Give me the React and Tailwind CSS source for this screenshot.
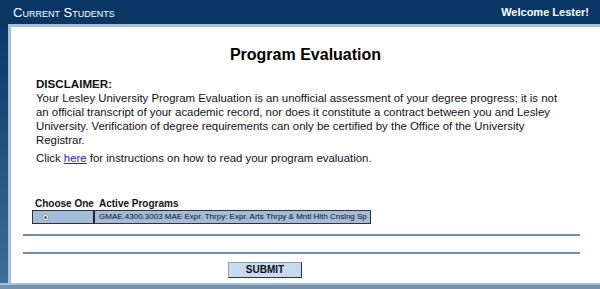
import React from 'react'

export default function App() {
  return (
    <div className="w-[600px] h-[289px] overflow-hidden bg-white font-['Liberation_Sans',Arial,sans-serif] flex flex-col">
      {/* Header */}
      <div className="h-[24px] bg-[#083766] flex items-center justify-between pl-[13px] pr-[11px] shrink-0">
        <div className="text-white text-[13px] leading-none pt-[1px]" style={{ fontVariant: 'small-caps' }}>
          Current Students
        </div>
        <div className="text-white text-[11px] font-bold leading-none">Welcome Lester!</div>
      </div>
      {/* Body */}
      <div className="flex flex-1 min-h-0">
        <div className="w-[8px] bg-gradient-to-b from-[#083766] to-[#3f6c99] shrink-0" />
        <div className="flex-1 border-l-[3px] border-t-[3px] border-[#a7bfdb] bg-white flex flex-col">
          <h1 className="text-center text-[16px] font-bold text-black mt-[18px] leading-[20px]">Program Evaluation</h1>
          <div className="pl-[25px] pr-[40px] mt-[12px] text-[11.4px] leading-[14px] text-[#111]">
            <p className="font-bold text-[11.6px]">DISCLAIMER:</p>
            <p>
              Your Lesley University Program Evaluation is an unofficial assessment of your degree progress; it is not an official transcript of your academic record, nor does it constitute a contract between you and Lesley University. Verification of degree requirements can only be certified by the Office of the University Registrar.
            </p>
            <p className="mt-[4px]">
              Click <a className="text-[#1a1ad8] underline">here</a> for instructions on how to read your program evaluation.
            </p>
          </div>
          {/* Programs table */}
          <div className="ml-[21px] mt-[33px] w-[339px]">
            <div className="flex text-[10px] font-bold leading-[12px] text-[#111] whitespace-nowrap">
              <div className="w-[64px] shrink-0 pl-[3px]">Choose One</div>
              <div className="pl-[3px]">Active Programs</div>
            </div>
            <div className="flex h-[14px] bg-[#a3bcd9] border border-[#333]">
              <div className="w-[62px] shrink-0 border-r-2 border-[#222] flex items-center pl-[9px]">
                <span className="w-[7px] h-[7px] rounded-full bg-white border border-[#999] flex items-center justify-center">
                  <span className="w-[3px] h-[3px] rounded-full bg-[#555]" />
                </span>
              </div>
              <div className="flex-1 text-[8px] leading-[12px] pl-[4px] text-[#111] whitespace-nowrap overflow-hidden">
                GMAE.4300.3003 MAE Expr. Thrpy: Expr. Arts Thrpy &amp; Mntl Hlth Cnslng Sp
              </div>
            </div>
          </div>
          <div className="ml-[12px] mr-[20px] mt-[10px] h-[2px] bg-[#6f8dab]" />
          <div className="ml-[12px] mr-[20px] mt-[16px] h-[2px] bg-[#6f8dab]" />
          <div className="flex mt-[8px] pl-[217px]">
            <button className="w-[74px] h-[16px] bg-[#c6daf0] border border-[#8a9fb5] border-r-[#333] border-b-[#333] text-[10px] font-bold leading-none text-[#111]">
              SUBMIT
            </button>
          </div>
        </div>
      </div>
      {/* Footer */}
      <div className="h-[2px] bg-[#a7bfdb] shrink-0" />
      <div className="h-[4px] bg-[#7890aa] shrink-0" />
    </div>
  )
}
